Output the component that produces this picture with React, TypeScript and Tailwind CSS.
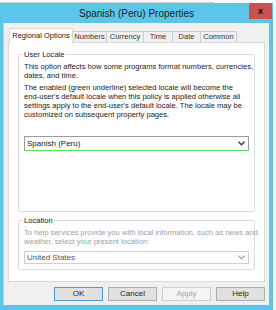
import React from 'react';

const font = { fontFamily: '"Liberation Sans", Arial, sans-serif' };

const tabs = [
  { label: 'Numbers', w: 'w-[34px]' },
  { label: 'Currency', w: 'w-[37px]' },
  { label: 'Time', w: 'w-[29px]' },
  { label: 'Date', w: 'w-[28px]' },
  { label: 'Common', w: 'w-[36px]' },
];

function Combo({ text, active }: { text: string; active?: boolean }) {
  return (
    <div
      className={
        active
          ? 'flex items-center justify-between h-[15px] bg-white border border-[#9b9b9b] border-b-[#55e055] px-[2px] text-[8px] text-[#1a1a1a]'
          : 'flex items-center justify-between h-[13px] bg-white border border-[#cfcfcf] px-[2px] text-[8px] text-[#555]'
      }
    >
      <span>{text}</span>
      <svg width="7" height="5" viewBox="0 0 7 5" className="mr-[1px]">
        <path d="M0.5 0.8 L3.5 3.8 L6.5 0.8" fill="none" stroke={active ? '#333' : '#aaa'} strokeWidth="1.3" />
      </svg>
    </div>
  );
}

function Button({ label, primary, disabled }: { label: string; primary?: boolean; disabled?: boolean }) {
  return (
    <div
      className={
        'w-[49px] h-[14px] flex items-center justify-center text-[8px] border ' +
        (disabled
          ? 'bg-[#f4f4f4] border-[#cfcfcf] text-[#a3a3a3]'
          : primary
            ? 'bg-[#e1e1e1] border-[#4a9ad6] text-[#222]'
            : 'bg-[#e1e1e1] border-[#adadad] text-[#222]')
      }
    >
      {label}
    </div>
  );
}

export default function App() {
  return (
    <div className="w-[276px] h-[310px] bg-white overflow-hidden" style={font}>
      <div className="h-[3px] w-[214px] border-b border-[#cfcfcf]" />
      <div className="w-[273px] h-[307px] bg-[#5bc6ea] flex flex-col">
        {/* Title bar */}
        <div className="relative h-[20px] flex items-center justify-center">
          <span className="text-[10px] text-[#1c1c1c]">Spanish (Peru) Properties</span>
          <div className="absolute right-[1px] top-0 w-[23px] h-[16px] bg-[#c75050] flex items-center justify-center">
            <span className="text-[9px] font-bold text-[#111] leading-none">x</span>
          </div>
        </div>

        {/* Body */}
        <div className="ml-[3px] mr-[4px] h-[282px] bg-[#f0f0f0] border-l border-[#cfcfcf] pt-[5px] pl-[4px] pr-[1px]">
          {/* Tab strip */}
          <div className="flex items-end h-[14px] pl-[1px]">
            <div className="relative z-10 h-[15px] w-[64px] bg-white border border-b-0 border-[#d9d9d9] text-[7.5px] text-[#1a1a1a] flex items-center justify-center -mb-[1px]">
              Regional Options
            </div>
            {tabs.map((t) => (
              <div
                key={t.label}
                className={
                  t.w +
                  ' h-[11px] bg-[#f0f0f0] border border-b-0 border-l-0 border-[#cdcdcd] text-[7.5px] text-[#333] flex items-center justify-center'
                }
              >
                {t.label}
              </div>
            ))}
          </div>

          {/* Panel */}
          <div className="w-[257px] h-[240px] bg-white border border-[#d9d9d9] px-[9px] pt-[7px] text-[7.6px] text-[#1a1a1a]">
            <fieldset className="min-w-0 h-[162px] border border-[#dcdcdc] rounded-[2px] px-[5px]">
              <legend className="px-[1px] -ml-[1px] leading-[9px]">User Locale</legend>
              <div className="leading-[9px] mt-[3px] whitespace-nowrap">
                <div>This option affects how some programs format numbers, currencies,</div>
                <div>dates, and time.</div>
              </div>
              <div className="leading-[9px] mt-[3px] whitespace-nowrap">
                <div>The enabled (green underline) selected locale will become the</div>
                <div>end-user's default locale when this policy is applied otherwise all</div>
                <div>settings apply to the end-user's default locale. The locale may be</div>
                <div>customized on subsequent property pages.</div>
              </div>
              <div className="mt-[17px]">
                <Combo text="Spanish (Peru)" active />
              </div>
            </fieldset>

            <fieldset className="min-w-0 mt-[4px] h-[54px] border border-[#dcdcdc] rounded-[2px] px-[5px]">
              <legend className="px-[1px] -ml-[1px] leading-[9px]">Location</legend>
              <div className="leading-[9px] mt-[3px] whitespace-nowrap text-[#a0a0a0]">
                <div>To help services provide you with local information, such as news and</div>
                <div>weather, select your present location:</div>
              </div>
              <div className="mt-[5px]">
                <Combo text="United States" />
              </div>
            </fieldset>
          </div>

          {/* Buttons */}
          <div className="w-[257px] flex justify-end gap-[5px] mt-[5px]">
            <Button label="OK" primary />
            <Button label="Cancel" />
            <Button label="Apply" disabled />
            <Button label="Help" />
          </div>
        </div>
      </div>
    </div>
  );
}
